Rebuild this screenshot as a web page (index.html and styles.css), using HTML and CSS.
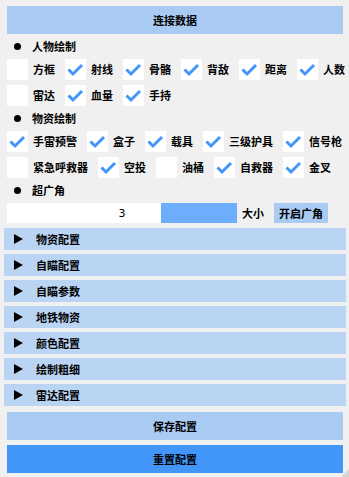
FILE: index.html
```html
<!DOCTYPE html>
<html lang="zh-CN">
<head>
<meta charset="utf-8">
<title>配置</title>
<link rel="stylesheet" href="styles.css">
</head>
<body>
<div class="win">
  <div class="btn btn-top">连接数据</div>

  <div class="title"><span class="bullet"></span>人物绘制</div>
  <div class="row">
    <label class="cb"><span class="box"></span>方框</label>
    <label class="cb"><span class="box on"><svg viewBox="0 0 21 21"><path d="M3.5 10.5 L8 15 L17 6"/></svg></span>射线</label>
    <label class="cb"><span class="box on"><svg viewBox="0 0 21 21"><path d="M3.5 10.5 L8 15 L17 6"/></svg></span>骨骼</label>
    <label class="cb"><span class="box on"><svg viewBox="0 0 21 21"><path d="M3.5 10.5 L8 15 L17 6"/></svg></span>背敌</label>
    <label class="cb"><span class="box on"><svg viewBox="0 0 21 21"><path d="M3.5 10.5 L8 15 L17 6"/></svg></span>距离</label>
    <label class="cb"><span class="box on"><svg viewBox="0 0 21 21"><path d="M3.5 10.5 L8 15 L17 6"/></svg></span>人数</label>
  </div>
  <div class="row">
    <label class="cb"><span class="box"></span>雷达</label>
    <label class="cb"><span class="box on"><svg viewBox="0 0 21 21"><path d="M3.5 10.5 L8 15 L17 6"/></svg></span>血量</label>
    <label class="cb"><span class="box on"><svg viewBox="0 0 21 21"><path d="M3.5 10.5 L8 15 L17 6"/></svg></span>手持</label>
  </div>

  <div class="title"><span class="bullet"></span>物资绘制</div>
  <div class="row">
    <label class="cb"><span class="box on"><svg viewBox="0 0 21 21"><path d="M3.5 10.5 L8 15 L17 6"/></svg></span>手雷预警</label>
    <label class="cb"><span class="box on"><svg viewBox="0 0 21 21"><path d="M3.5 10.5 L8 15 L17 6"/></svg></span>盒子</label>
    <label class="cb"><span class="box on"><svg viewBox="0 0 21 21"><path d="M3.5 10.5 L8 15 L17 6"/></svg></span>载具</label>
    <label class="cb"><span class="box on"><svg viewBox="0 0 21 21"><path d="M3.5 10.5 L8 15 L17 6"/></svg></span>三级护具</label>
    <label class="cb"><span class="box on"><svg viewBox="0 0 21 21"><path d="M3.5 10.5 L8 15 L17 6"/></svg></span>信号枪</label>
  </div>
  <div class="row">
    <label class="cb"><span class="box"></span>紧急呼救器</label>
    <label class="cb"><span class="box on"><svg viewBox="0 0 21 21"><path d="M3.5 10.5 L8 15 L17 6"/></svg></span>空投</label>
    <label class="cb"><span class="box"></span>油桶</label>
    <label class="cb"><span class="box on"><svg viewBox="0 0 21 21"><path d="M3.5 10.5 L8 15 L17 6"/></svg></span>自救器</label>
    <label class="cb"><span class="box on"><svg viewBox="0 0 21 21"><path d="M3.5 10.5 L8 15 L17 6"/></svg></span>金叉</label>
  </div>

  <div class="title"><span class="bullet"></span>超广角</div>
  <div class="slider-row">
    <div class="slider">
      <span class="slider-val">3</span>
      <span class="grab"></span>
    </div>
    <span class="slider-label">大小</span>
    <div class="btn btn-small">开启广角</div>
  </div>

  <div class="headers">
    <div class="hdr"><span class="arrow"></span>物资配置</div>
    <div class="hdr"><span class="arrow"></span>自瞄配置</div>
    <div class="hdr"><span class="arrow"></span>自瞄参数</div>
    <div class="hdr"><span class="arrow"></span>地铁物资</div>
    <div class="hdr"><span class="arrow"></span>颜色配置</div>
    <div class="hdr"><span class="arrow"></span>绘制粗细</div>
    <div class="hdr"><span class="arrow"></span>雷达配置</div>
  </div>

  <div class="btn btn-save">保存配置</div>
  <div class="btn btn-reset">重置配置</div>

  <span class="grip"></span>
</div>
</body>
</html>
```

FILE: styles.css
```css
* { box-sizing: border-box; }
html, body {
  margin: 0;
  padding: 0;
  background: #f0f0f0;
}
body {
  font-family: "Noto Sans CJK SC", "Noto Sans", "DejaVu Sans", sans-serif;
  font-size: 11px;
  font-weight: 700;
  color: #000;
  line-height: 1;
}
.win {
  position: relative;
  width: 349px;
  height: 477px;
  padding: 6px 6px 0 7px;
  overflow: hidden;
}
.btn {
  display: flex;
  align-items: center;
  justify-content: center;
  background: #a9caf3;
}
.btn-top { height: 28px; }
.title {
  height: 25px;
  display: flex;
  align-items: center;
}
.bullet {
  width: 7px;
  height: 7px;
  border-radius: 50%;
  background: #000;
  margin: 0 11px 0 7px;
}
.row {
  display: flex;
  gap: 10px;
  height: 21px;
}
.row + .row { margin-top: 5px; }
.cb {
  display: flex;
  align-items: center;
  white-space: nowrap;
}
.box {
  width: 21px;
  height: 21px;
  background: #fff;
  margin-right: 5px;
  flex: none;
  display: block;
}
.box svg {
  width: 21px;
  height: 21px;
  display: block;
}
.box svg path {
  fill: none;
  stroke: #4296fa;
  stroke-width: 3;
  stroke-linecap: butt;
  stroke-linejoin: miter;
}
.slider-row {
  display: flex;
  align-items: center;
  height: 20px;
}
.slider {
  position: relative;
  width: 230px;
  height: 20px;
  background: #fff;
  display: flex;
  align-items: center;
  justify-content: center;
}
.slider-val {
  font-family: "DejaVu Sans", sans-serif;
  font-size: 11px;
  font-weight: 400;
  position: relative;
  z-index: 1;
}
.grab {
  position: absolute;
  top: 0;
  right: 0;
  width: 76px;
  height: 20px;
  background: #6caefb;
}
.slider-label { margin-left: 5px; }
.btn-small {
  margin-left: 10px;
  height: 20px;
  padding: 0 5px;
}
.headers {
  margin: 5px -3px 0 -3px;
  display: flex;
  flex-direction: column;
  gap: 4px;
}
.hdr {
  height: 22px;
  background: #bad4f3;
  display: flex;
  align-items: center;
}
.arrow {
  width: 0;
  height: 0;
  border-top: 5px solid transparent;
  border-bottom: 5px solid transparent;
  border-left: 9px solid #000;
  margin: 0 13px 0 10px;
}
.btn-save {
  margin-top: 6px;
  height: 28px;
}
.btn-reset {
  margin-top: 5px;
  height: 28px;
  background: #4296fa;
}
.grip {
  position: absolute;
  right: 0;
  bottom: 0;
  width: 0;
  height: 0;
  border-left: 8px solid transparent;
  border-bottom: 8px solid #d6d6d6;
}
```
